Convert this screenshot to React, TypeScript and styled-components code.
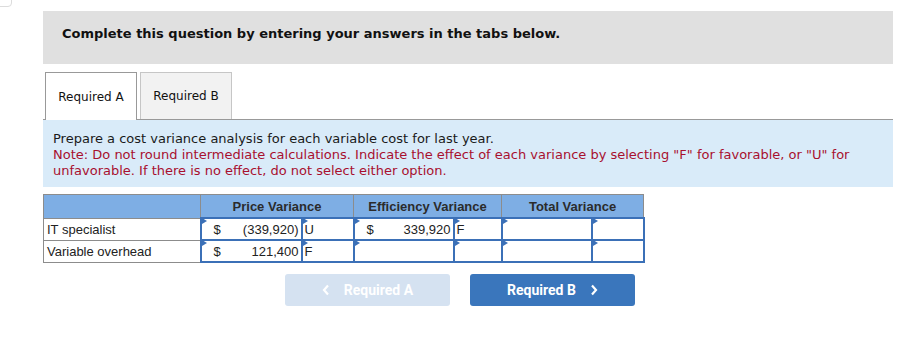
import styled, { createGlobalStyle } from 'styled-components'

const GlobalStyle = createGlobalStyle`
  body {
    margin: 0;
    background: #ffffff;
    font-family: "DejaVu Sans", Verdana, sans-serif;
    color: #222222;
  }
`

const App = () => {
  return (
    <>
      <GlobalStyle />
      <Corner />
      <Page>
        <Banner>Complete this question by entering your answers in the tabs below.</Banner>
        <TabBar>
          <Tab $active>Required A</Tab>
          <Tab>Required B</Tab>
        </TabBar>
        <Instructions>
          <div>Prepare a cost variance analysis for each variable cost for last year.</div>
          <Note>
            Note: Do not round intermediate calculations. Indicate the effect of each variance by selecting "F" for favorable, or "U" for unfavorable. If there is no effect, do not select either option.
          </Note>
        </Instructions>
        <Grid>
          <colgroup>
            <col style={{ width: 157 }} />
            <col style={{ width: 101 }} />
            <col style={{ width: 52 }} />
            <col style={{ width: 100 }} />
            <col style={{ width: 48 }} />
            <col style={{ width: 90 }} />
            <col style={{ width: 52 }} />
          </colgroup>
          <thead>
            <tr>
              <HeadCell />
              <HeadCell colSpan={2}>Price Variance</HeadCell>
              <HeadCell colSpan={2}>Efficiency Variance</HeadCell>
              <HeadCell colSpan={2}>Total Variance</HeadCell>
            </tr>
          </thead>
          <tbody>
            {rows.map((row) => (
              <tr key={row.label}>
                <LabelCell>{row.label}</LabelCell>
                {row.cells.map((cell, i) => (
                  <InputCell key={i} $flag={i % 2 === 1}>
                    {cell && i % 2 === 0 ? (
                      <Amount>
                        <span>$</span>
                        <span>{cell}</span>
                      </Amount>
                    ) : (
                      cell
                    )}
                  </InputCell>
                ))}
              </tr>
            ))}
          </tbody>
        </Grid>
        <Nav>
          <NavButton $disabled>
            <Chevron viewBox="0 0 8 12">
              <polyline points="6,1.5 2,6 6,10.5" />
            </Chevron>
            Required A
          </NavButton>
          <NavButton>
            Required B
            <Chevron viewBox="0 0 8 12">
              <polyline points="2,1.5 6,6 2,10.5" />
            </Chevron>
          </NavButton>
        </Nav>
      </Page>
    </>
  )
}

const rows = [
  { label: 'IT specialist', cells: ['(339,920)', 'U', '339,920', 'F', '', ''] },
  { label: 'Variable overhead', cells: ['121,400', 'F', '', '', '', ''] },
]

const Corner = styled.div`
  position: absolute;
  top: -6px;
  left: -6px;
  width: 16px;
  height: 11px;
  border: 1px solid #dcdcdc;
  border-radius: 4px;
`

const Page = styled.div`
  width: 850px;
  padding: 11px 0 0 43px;
`

const Banner = styled.div`
  box-sizing: border-box;
  height: 53px;
  padding: 15px 19px 0;
  background: #e0e0e0;
  font-size: 13px;
  font-weight: bold;
  line-height: 16px;
  color: #111;
`

const TabBar = styled.div`
  display: flex;
  gap: 3px;
  margin-top: 8px;
  padding-left: 2px;
  border-bottom: 1px solid #999999;
`

const Tab = styled.div<{ $active?: boolean }>`
  box-sizing: border-box;
  width: 92px;
  display: flex;
  align-items: center;
  justify-content: center;
  font-size: 12px;
  color: #111;
  background: ${(props) => (props.$active ? '#ffffff' : '#f2f2f2')};
  border: 1px solid ${(props) => (props.$active ? '#999999' : '#c6c6c6')};
  border-bottom: none;
  margin-bottom: ${(props) => (props.$active ? '-1px' : '0')};
  height: ${(props) => (props.$active ? '48px' : '47px')};
`

const Instructions = styled.div`
  background: #d9ebf9;
  padding: 11px 10px 8px;
  font-size: 13px;
  line-height: 16px;
  color: #1a1a1a;
`

const Note = styled.div`
  color: #a8102f;
`

const Grid = styled.table`
  margin-top: 7px;
  width: 600px;
  border-collapse: collapse;
  table-layout: fixed;
  font-family: "Liberation Sans", Arial, sans-serif;
  font-size: 13px;
  color: #222;
`

const HeadCell = styled.th`
  height: 22px;
  padding: 0;
  background: #7eaee4;
  border: 1px solid #8c8c8c;
  font-weight: bold;
  text-align: center;
  color: #2b2b2b;
`

const LabelCell = styled.td`
  height: 21px;
  padding: 0 3px;
  border: 1px solid #8c8c8c;
  white-space: nowrap;
`

const InputCell = styled.td<{ $flag: boolean }>`
  position: relative;
  height: 20px;
  padding: ${(props) => (props.$flag ? '0 2px' : '0 2px 0 12px')};
  border: 2px solid #3b70b7;
  background: #ffffff;
  white-space: nowrap;

  &::before {
    content: '';
    position: absolute;
    top: 0;
    left: 0;
    border-top: 3px solid transparent;
    border-bottom: 3px solid transparent;
    border-left: 5px solid #3b70b7;
    transform: translateY(-1px);
  }
`

const Amount = styled.div`
  display: flex;
  justify-content: space-between;
`

const Nav = styled.div`
  display: flex;
  gap: 20px;
  margin: 11px 0 0 242px;
`

const NavButton = styled.div<{ $disabled?: boolean }>`
  width: 165px;
  height: 32px;
  display: flex;
  align-items: center;
  justify-content: center;
  gap: 14px;
  border-radius: 3px;
  background: ${(props) => (props.$disabled ? '#d5e2f1' : '#3a76bc')};
  color: #ffffff;
  font-family: Roboto, "Liberation Sans", sans-serif;
  font-size: 14px;
  font-weight: bold;
`

const Chevron = styled.svg`
  width: 8px;
  height: 12px;
  fill: none;
  stroke: #ffffff;
  stroke-width: 2.2;
`

export default App
